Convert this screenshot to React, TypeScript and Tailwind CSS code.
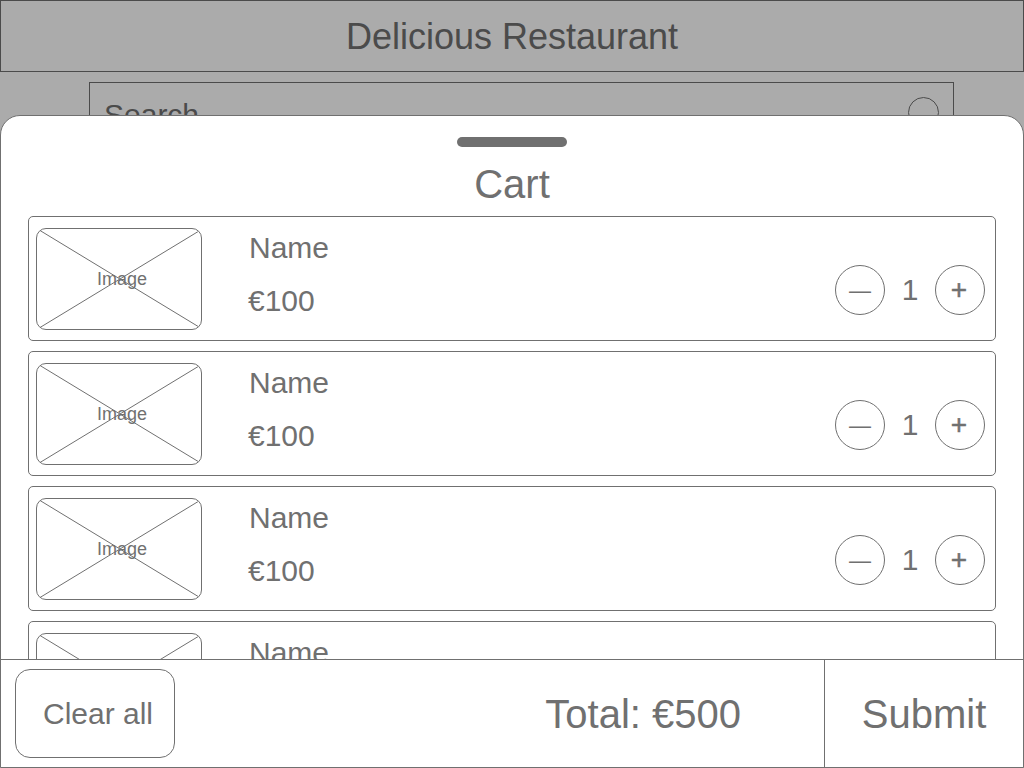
import { useState } from "react";

type Item = { id: number; name: string; price: number; quantity: number };

const initialItems: Item[] = [1, 2, 3, 4, 5].map((id) => ({
  id,
  name: "Name",
  price: 100,
  quantity: 1,
}));

function ImagePlaceholder() {
  return (
    <div className="relative flex h-[102px] w-[166px] shrink-0 items-center justify-center overflow-hidden rounded-[10px] border border-[#707070]">
      <svg
        className="absolute inset-0 h-full w-full"
        viewBox="0 0 164 100"
        fill="none"
        stroke="#707070"
        strokeWidth="1"
        aria-hidden="true"
      >
        <path d="M3 1.5 162 98M162 2 3 98.5" />
      </svg>
      <span className="relative pl-[6px] text-lg leading-6">Image</span>
    </div>
  );
}

function CartRow({ item, onChange }: { item: Item; onChange: (delta: number) => void }) {
  return (
    <li className="flex shrink-0 items-start rounded-[5px] border border-[#707070] pt-[11px] pr-[10px] pb-[10px] pl-[7px]">
      <ImagePlaceholder />
      <div className="-mt-[7px] ml-[46px] grow text-3xl leading-[53px]">
        <h2 className="pl-px">{item.name}</h2>
        <p>€{item.price}</p>
      </div>
      <div className="mt-9 flex items-center">
        <button
          type="button"
          aria-label="Decrease quantity"
          onClick={() => onChange(-1)}
          className="flex size-[50px] items-center justify-center rounded-full border border-[#707070] pt-[2px] text-[22px] leading-[30px]"
        >
          —
        </button>
        <span className="w-[50px] text-center text-[30px] leading-[52px]">{item.quantity}</span>
        <button
          type="button"
          aria-label="Increase quantity"
          onClick={() => onChange(1)}
          className="flex size-[50px] items-center justify-center rounded-full border border-[#707070] pr-[2px] text-[28px] leading-[30px] [-webkit-text-stroke:0.5px_#707070]"
        >
          +
        </button>
      </div>
    </li>
  );
}

export default function App() {
  const [items, setItems] = useState(initialItems);
  const total = items.reduce((sum, item) => sum + item.price * item.quantity, 0);

  const change = (id: number, delta: number) =>
    setItems((list) =>
      list
        .map((item) => (item.id === id ? { ...item, quantity: item.quantity + delta } : item))
        .filter((item) => item.quantity > 0),
    );

  return (
    <div className="relative h-screen overflow-hidden bg-white font-['Liberation_Sans',Arial,sans-serif] text-[#707070]">
      <header className="flex h-[72px] items-center justify-center border border-[#707070] pt-[2px]">
        <h1 className="text-4xl">Delicious Restaurant</h1>
      </header>
      <main className="pt-[10px] pr-[70px] pl-[89px]">
        <label className="flex h-[66px] items-center border border-[#707070] pr-[10px] pl-[14px]">
          <input
            type="search"
            aria-label="Search"
            placeholder="Search"
            className="min-w-0 grow bg-transparent text-[30px] leading-9 outline-none placeholder:text-[#707070]"
          />
          <svg
            className="size-9 shrink-0"
            viewBox="0 0 36 36"
            fill="none"
            stroke="#707070"
            aria-hidden="true"
          >
            <circle cx="16.5" cy="15.5" r="15" />
            <path d="m27 26 8 9" />
          </svg>
        </label>
      </main>

      <div className="absolute inset-0 bg-black/33" />

      <section
        role="dialog"
        aria-label="Cart"
        className="absolute inset-x-0 top-[115px] bottom-0 flex flex-col overflow-hidden rounded-t-[20px] border border-[#707070] bg-white"
      >
        <div className="mt-[21px] h-[10px] w-[110px] shrink-0 self-center rounded-full bg-[#707070]" />
        <h2 className="mt-4 mb-[11px] text-center text-[40px] leading-[42px]">Cart</h2>
        <ul className="flex min-h-0 grow flex-col gap-[10px] overflow-y-auto px-[27px] [scrollbar-width:none]">
          {items.map((item) => (
            <CartRow key={item.id} item={item} onChange={(delta) => change(item.id, delta)} />
          ))}
        </ul>
        <footer className="flex h-[108px] shrink-0 items-center border-t border-[#707070] pl-[14px]">
          <button
            type="button"
            onClick={() => setItems([])}
            className="h-[89px] w-40 rounded-[15px] border border-[#707070] pl-[6px] text-[30px] leading-9 whitespace-nowrap"
          >
            Clear all
          </button>
          <p className="grow pr-[83px] text-right text-[40px] leading-[42px]">Total: €{total}</p>
          <button
            type="button"
            className="w-[199px] self-stretch border-l border-[#707070] text-[40px] leading-[42px]"
          >
            Submit
          </button>
        </footer>
      </section>
    </div>
  );
}
